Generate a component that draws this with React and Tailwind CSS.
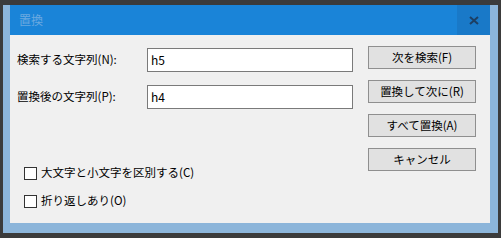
export default function App() {
  const font = { fontFamily: '"Noto Sans CJK JP", "Noto Sans", sans-serif' };
  return (
    <div className="w-[501px] h-[238px] bg-[#3b3b3b] pt-[5px] pl-[3px]" style={font}>
      <div className="w-[495px] h-[228px] bg-[#8cb5da] pl-[7px] pr-[8px] pb-[10px] flex flex-col">
        <div className="h-[30px] bg-[#1a84d8] flex items-center justify-between">
          <span className="pl-[9px] text-[12px] text-[#6aa9e0]">置換</span>
          <div className="w-[33px] h-[30px] bg-[#1979c8] flex items-center justify-center">
            <svg width="10" height="9" viewBox="0 0 10 9">
              <path d="M1 1 L9 8 M9 1 L1 8" stroke="#1d3f63" strokeWidth="2" />
            </svg>
          </div>
        </div>
        <div className="flex-1 bg-[#f0f0f0] flex text-[11.5px] text-black">
          <div className="w-[358px] pl-[7px] pt-[13px] flex flex-col">
            <div className="flex items-center h-[24px]">
              <span className="w-[130px]">検索する文字列(N):</span>
              <div className="w-[206px] h-[24px] bg-white border border-[#7a7a7a] pl-[3px] flex items-center text-[12px]">h5</div>
            </div>
            <div className="flex items-center h-[24px] mt-[13px]">
              <span className="w-[130px]">置換後の文字列(P):</span>
              <div className="w-[206px] h-[24px] bg-white border border-[#7a7a7a] pl-[3px] flex items-center text-[12px]">h4</div>
            </div>
            <div className="flex items-center gap-[4px] pl-[7px] mt-[56px] h-[16px]">
              <div className="w-[13px] h-[13px] bg-white border border-[#333]"></div>
              <span>大文字と小文字を区別する(C)</span>
            </div>
            <div className="flex items-center gap-[4px] pl-[7px] mt-[12px] h-[16px]">
              <div className="w-[13px] h-[13px] bg-white border border-[#333]"></div>
              <span>折り返しあり(O)</span>
            </div>
          </div>
          <div className="pt-[11px] flex flex-col gap-[11px]">
            {["次を検索(F)", "置換して次に(R)", "すべて置換(A)", "キャンセル"].map((t) => (
              <div
                key={t}
                className="w-[108px] h-[23px] bg-[#e1e1e1] border border-[#8f8f8f] flex items-center justify-center"
              >
                {t}
              </div>
            ))}
          </div>
        </div>
      </div>
    </div>
  );
}
